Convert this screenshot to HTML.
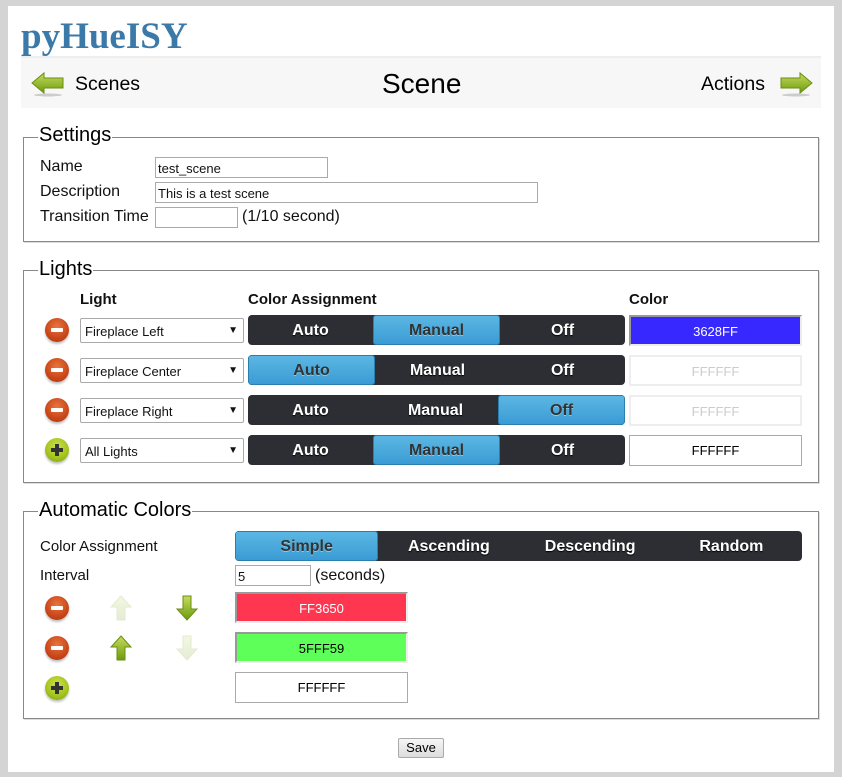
<!DOCTYPE html>
<html><head><meta charset="utf-8">
<style>
*{box-sizing:border-box}
body{margin:0;width:842px;height:777px;background:#d4d4d4;font-family:"Liberation Sans",Arial,sans-serif;position:relative;overflow:hidden}
#pg{position:absolute;left:8px;top:6px;width:826px;height:766px;background:#fff}
.a{position:absolute}
.t{font-size:16px;color:#111}
.fs{position:absolute;border:1px solid #888;box-shadow:1px 1px 0 #ddd}
.lg{position:absolute;background:#fff;padding:0 1px;font-size:20px;color:#000}
.inp{position:absolute;border:1px solid #aaa;height:21px;font-size:13px;padding:3px 2px;color:#111;background:#fff}
.sel{position:absolute;border:1px solid #aaa;height:25px;font-size:13px;padding:5px 4px;color:#111;background:#fff;border-radius:2px}
.sel:after{content:"▼";position:absolute;right:5px;top:6px;font-size:10px}
.seg{position:absolute;background:#2c2e33;border-radius:4px;height:30px;display:flex;overflow:hidden}
.seg div{flex:1;text-align:center;color:#fff;font-weight:bold;font-size:16px;line-height:31px;text-shadow:0 1px 1px #000}
.seg div.on{background:linear-gradient(#5cb6e2,#3a9cd5);color:#333;text-shadow:0 1px 0 #8ccbe9;border:1px solid #2a7fb0;border-radius:3px;line-height:29px}
.cb{position:absolute;width:173px;height:31px;text-align:center;line-height:29px;font-size:13px}
.ic{position:absolute;width:24px;height:24px;border-radius:50%;box-shadow:0 2px 2px rgba(0,0,0,.25)}
.ic.r{background:radial-gradient(circle at 50% 35%,#e8743e,#c9471a 60%,#a8350e)}
.ic.g{background:radial-gradient(circle at 50% 35%,#cfe04a,#a2c21d 60%,#7f9a10)}
.ic.r:after{content:"";position:absolute;left:6px;top:10px;width:12px;height:4px;background:#fff;border-radius:1px}
.ic.g:before{content:"";position:absolute;left:6px;top:10px;width:12px;height:4px;background:#333}
.ic.g:after{content:"";position:absolute;left:10px;top:6px;width:4px;height:12px;background:#333}
</style></head><body>
<div id="pg"></div>
<div class="a" style="left:21px;top:15px;font-family:'Liberation Serif',serif;font-weight:bold;font-size:37px;color:#3b7aa8">pyHueISY</div>
<div class="a" style="left:21px;top:56px;width:800px;height:52px;background:#f7f7f7;border-top:2px solid #eee"></div>
<svg class="a" style="left:30px;top:71px" width="36" height="26" viewBox="0 0 36 26"><defs><linearGradient id="ga" x1="0" y1="0" x2="0" y2="1"><stop offset="0" stop-color="#c6dc5c"/><stop offset="1" stop-color="#6c9a10"/></linearGradient></defs><ellipse cx="18" cy="24" rx="14" ry="1.5" fill="#ccc"/><path d="M2 12 L14 2 L14 7 L33 7 L33 17 L14 17 L14 22 Z" fill="url(#ga)" stroke="#6a8f12" stroke-width="1"/></svg>
<div class="a" style="left:75px;top:73px;font-size:19.5px">Scenes</div>
<div class="a" style="left:382px;top:68px;font-size:28px">Scene</div>
<div class="a" style="left:701px;top:73px;font-size:19.5px">Actions</div>
<svg class="a" style="left:778px;top:71px" width="36" height="26" viewBox="0 0 36 26"><ellipse cx="18" cy="24" rx="14" ry="1.5" fill="#ccc"/><path d="M34 12 L22 2 L22 7 L3 7 L3 17 L22 17 L22 22 Z" fill="url(#ga)" stroke="#6a8f12" stroke-width="1"/></svg>

<div class="fs" style="left:23px;top:137px;width:796px;height:105px"></div>
<div class="lg" style="left:38px;top:124px">Settings</div>
<div class="a t" style="left:40px;top:158px">Name</div>
<div class="a t" style="left:40px;top:183px">Description</div>
<div class="a t" style="left:40px;top:208px">Transition Time</div>
<div class="inp" style="left:155px;top:157px;width:173px">test_scene</div>
<div class="inp" style="left:155px;top:182px;width:383px">This is a test scene</div>
<div class="inp" style="left:155px;top:207px;width:83px"></div>
<div class="a t" style="left:242px;top:208px">(1/10 second)</div>

<div class="fs" style="left:23px;top:270px;width:796px;height:213px"></div>
<div class="lg" style="left:38px;top:258px">Lights</div>
<div class="a t" style="left:80px;top:291px;font-weight:bold;font-size:15px">Light</div>
<div class="a t" style="left:248px;top:291px;font-weight:bold;font-size:15px">Color Assignment</div>
<div class="a t" style="left:629px;top:291px;font-weight:bold;font-size:15px">Color</div>

<div class="ic r" style="left:45px;top:318px"></div>
<div class="sel" style="left:80px;top:318px;width:164px">Fireplace Left</div>
<div class="seg" style="left:248px;top:315px;width:377px"><div>Auto</div><div class="on">Manual</div><div>Off</div></div>
<div class="cb" style="left:629px;top:315px;background:#3628ff;color:#fff;border:2px solid #999;border-right-color:#eee;border-bottom-color:#eee">3628FF</div>

<div class="ic r" style="left:45px;top:358px"></div>
<div class="sel" style="left:80px;top:358px;width:164px">Fireplace Center</div>
<div class="seg" style="left:248px;top:355px;width:377px"><div class="on">Auto</div><div>Manual</div><div>Off</div></div>
<div class="cb" style="left:629px;top:355px;background:#fff;color:#ccc;border:2px solid #eee">FFFFFF</div>

<div class="ic r" style="left:45px;top:398px"></div>
<div class="sel" style="left:80px;top:398px;width:164px">Fireplace Right</div>
<div class="seg" style="left:248px;top:395px;width:377px"><div>Auto</div><div>Manual</div><div class="on">Off</div></div>
<div class="cb" style="left:629px;top:395px;background:#fff;color:#ccc;border:2px solid #eee">FFFFFF</div>

<div class="ic g" style="left:45px;top:438px"></div>
<div class="sel" style="left:80px;top:438px;width:164px">All Lights</div>
<div class="seg" style="left:248px;top:435px;width:377px"><div>Auto</div><div class="on">Manual</div><div>Off</div></div>
<div class="cb" style="left:629px;top:435px;background:#fff;color:#000;border:1px solid #aaa">FFFFFF</div>

<div class="fs" style="left:23px;top:511px;width:796px;height:208px"></div>
<div class="lg" style="left:38px;top:499px">Automatic Colors</div>
<div class="a t" style="left:40px;top:538px;font-size:15px">Color Assignment</div>
<div class="seg" style="left:235px;top:531px;width:567px"><div class="on">Simple</div><div>Ascending</div><div>Descending</div><div>Random</div></div>
<div class="a t" style="left:40px;top:567px;font-size:15px">Interval</div>
<div class="inp" style="left:235px;top:565px;width:76px;height:21px">5</div>
<div class="a t" style="left:315px;top:567px">(seconds)</div>

<svg width="0" height="0" style="position:absolute"><defs><linearGradient id="gu" x1="0" y1="0" x2="0" y2="1"><stop offset="0" stop-color="#c6dc5c"/><stop offset="1" stop-color="#6c9a10"/></linearGradient></defs></svg>
<div class="ic r" style="left:45px;top:596px"></div>
<svg class="a" style="left:109px;top:594px;opacity:.18" width="24" height="28" viewBox="0 0 24 28"><path d="M12 2 L22 13 L16 13 L16 26 L8 26 L8 13 L2 13 Z" fill="url(#gu)" stroke="#6a8f12"/></svg>
<svg class="a" style="left:175px;top:594px" width="24" height="28" viewBox="0 0 24 28"><path d="M12 26 L22 15 L16 15 L16 2 L8 2 L8 15 L2 15 Z" fill="url(#gu)" stroke="#6a8f12"/></svg>
<div class="cb" style="left:235px;top:592px;background:#ff3650;color:#fff;border:2px solid #999;border-right-color:#eee;border-bottom-color:#eee">FF3650</div>

<div class="ic r" style="left:45px;top:636px"></div>
<svg class="a" style="left:109px;top:634px" width="24" height="28" viewBox="0 0 24 28"><path d="M12 2 L22 13 L16 13 L16 26 L8 26 L8 13 L2 13 Z" fill="url(#gu)" stroke="#6a8f12"/></svg>
<svg class="a" style="left:175px;top:634px;opacity:.18" width="24" height="28" viewBox="0 0 24 28"><path d="M12 26 L22 15 L16 15 L16 2 L8 2 L8 15 L2 15 Z" fill="url(#gu)" stroke="#6a8f12"/></svg>
<div class="cb" style="left:235px;top:632px;background:#5fff59;color:#000;border:2px solid #999;border-right-color:#eee;border-bottom-color:#eee">5FFF59</div>

<div class="ic g" style="left:45px;top:676px"></div>
<div class="cb" style="left:235px;top:672px;background:#fff;color:#000;border:1px solid #aaa">FFFFFF</div>

<div class="a" style="left:398px;top:738px;width:46px;height:20px;border:1px solid #aaa;border-radius:2px;background:linear-gradient(#f6f6f6,#dcdcdc);font-size:13px;text-align:center;line-height:18px">Save</div>
</body></html>
